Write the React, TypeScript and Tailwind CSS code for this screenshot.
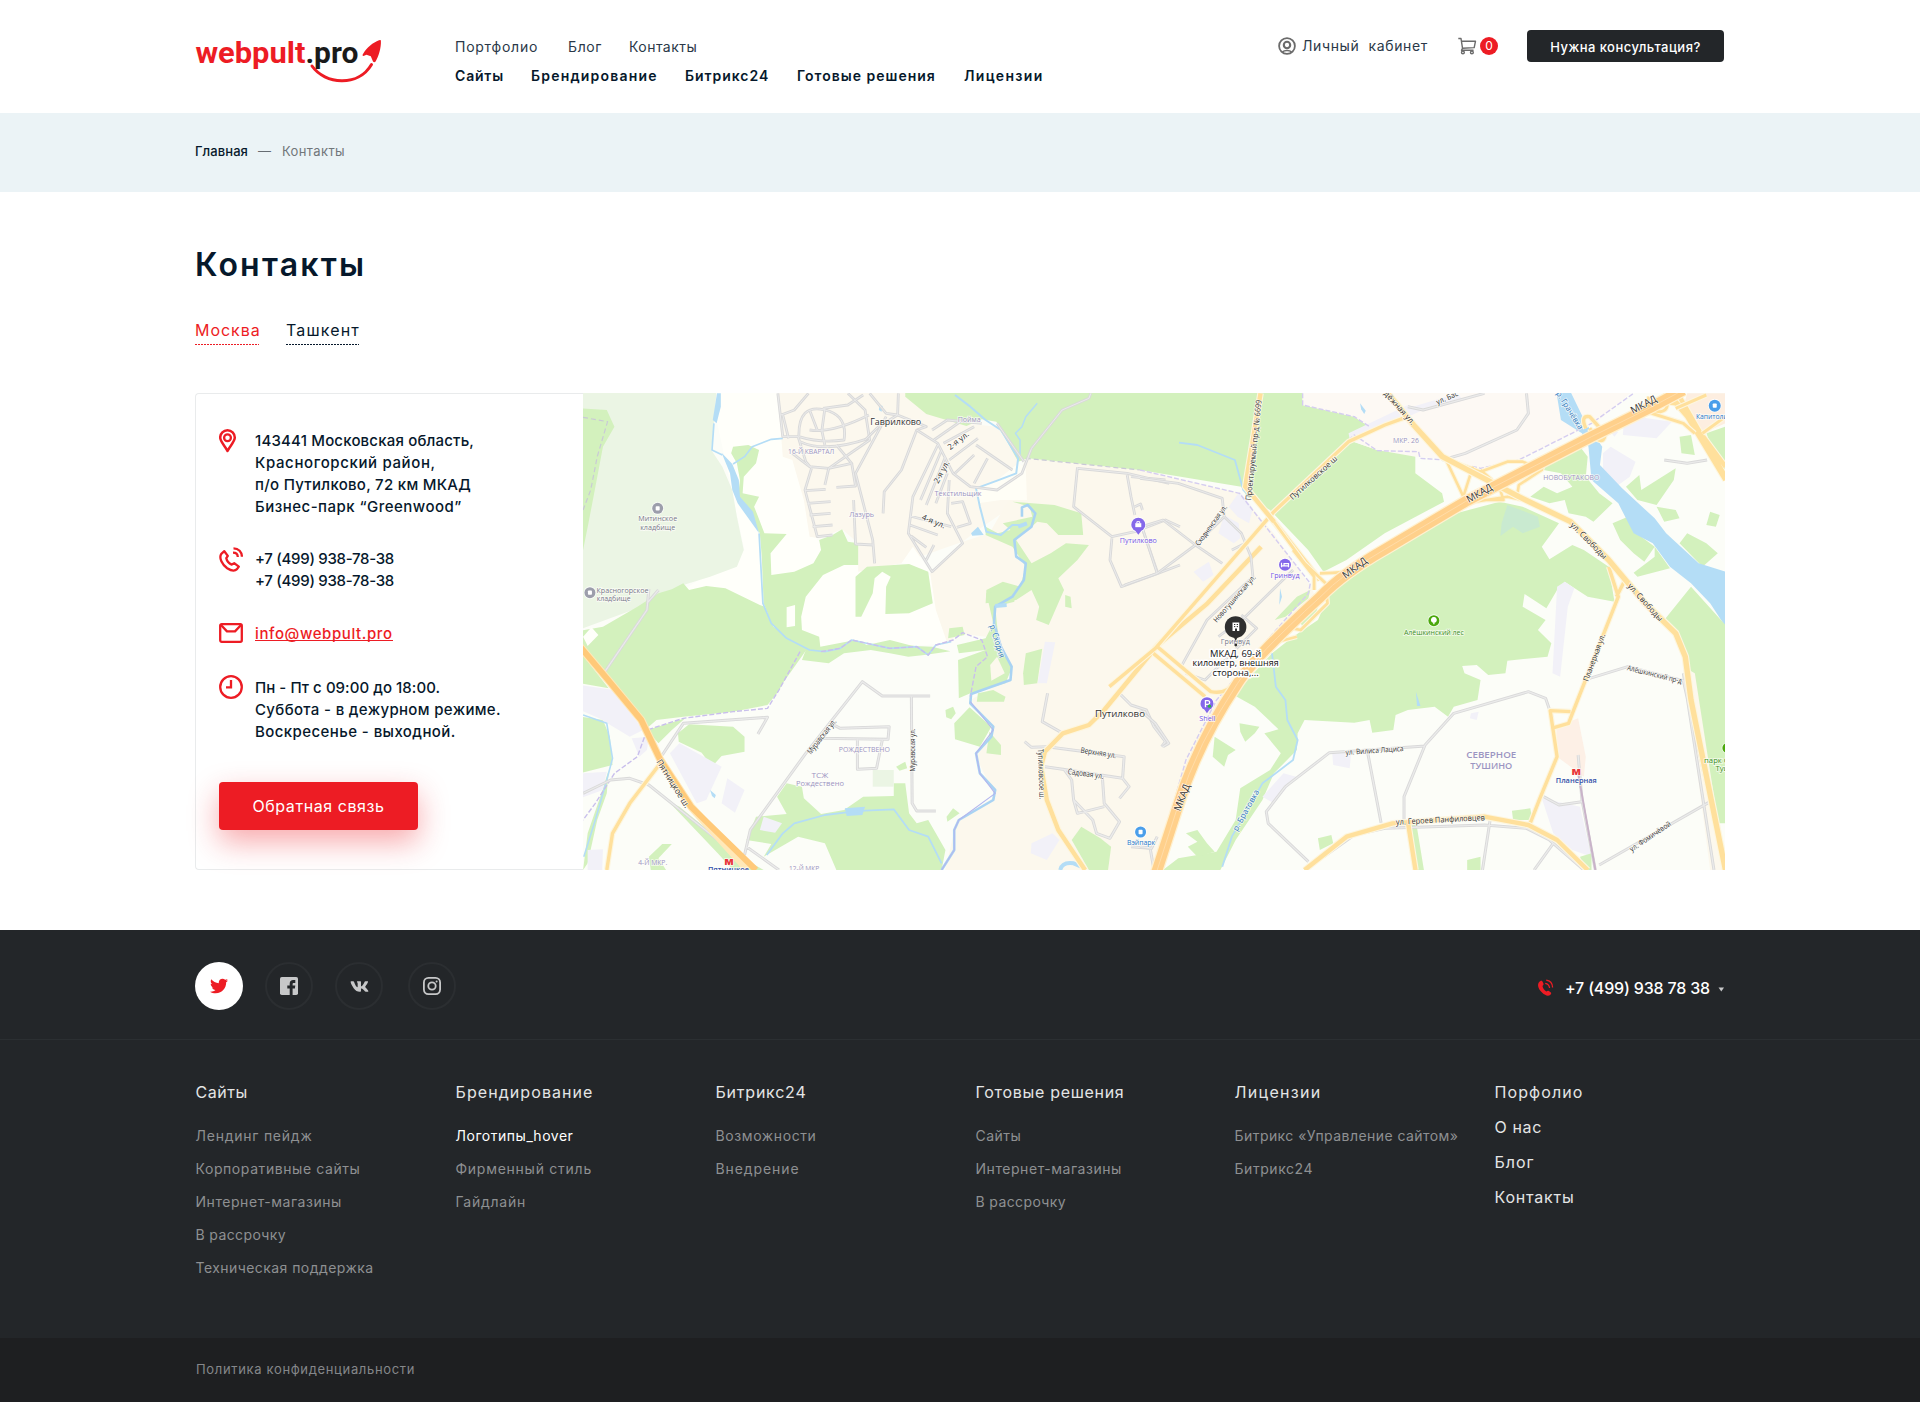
import type { ReactNode } from 'react'
import { FaTwitter, FaVk } from 'react-icons/fa'

const RED = '#ed1c24'

/* ---------- icons ---------- */

function Logo() {
  return (
    <svg width="194" height="60" viewBox="193 30 194 60" className="block overflow-visible">
      <g fontFamily="Roboto, sans-serif" fontWeight="700" fontSize="29">
        <text x="195.4" y="63.4" fill={RED} textLength="110" lengthAdjust="spacingAndGlyphs">webpult</text>
        <text x="305.4" y="63.4" fill="#1a1a1a" textLength="53" lengthAdjust="spacingAndGlyphs">.pro</text>
      </g>
      <path d="M312 66C325 84.500 358 87.500 371.500 64.500" fill="none" stroke={RED} strokeWidth="3" strokeLinecap="round" />
      <path d="M380.900 40.400C381.300 48 378.500 56.500 375.600 61.500C374.800 62.600 373.600 62.400 373 61.500L370.800 56.300L366.500 54.800L363.500 56C362.500 56 362.200 55 363 54C367 47 373 42.500 379 40.200Q380.600 39.500 380.900 40.400Z" fill={RED} />
    </svg>
  )
}

function UserIcon() {
  return (
    <svg width="18" height="18" viewBox="0 0 18 18" fill="none" stroke="#6b6b6b" className="block">
      <circle cx="9" cy="9" r="7.900" strokeWidth="1.800" />
      <circle cx="9" cy="8" r="3.200" strokeWidth="2.100" />
      <path d="M4.500 14.800C6.500 13 11.500 13 13.500 14.800" strokeWidth="1.600" />
    </svg>
  )
}

function CartIcon() {
  return (
    <svg width="19" height="18" viewBox="0 0 19 18" fill="none" stroke="#6b6b6b" strokeWidth="1.400" strokeLinejoin="round" className="block">
      <path d="M.3 1.500H3L4.500 11.200L3.500 13.300H15.500M3.400 4.200H17.500L16.200 10.600L4.500 11.200" />
      <circle cx="4.900" cy="15.400" r="1.400" />
      <circle cx="13.900" cy="15.400" r="1.400" />
    </svg>
  )
}

function PinIcon() {
  return (
    <svg width="18" height="25" viewBox="0 0 18 25" className="block" fill="none" stroke={RED}>
      <path d="M8.500 22C6.500 17.500 1.200 12.800 1.200 8.600A7.300 7.300 0 0 1 15.800 8.600C15.800 12.800 10.500 17.500 8.500 22Z" strokeWidth="2.500" strokeLinejoin="round" />
      <circle cx="8.500" cy="8.700" r="3.400" strokeWidth="2.300" />
    </svg>
  )
}

function PhoneIcon() {
  return (
    <svg width="24" height="25" viewBox="0 0 24 25" className="block" fill="none" stroke={RED} strokeWidth="2.300" strokeLinejoin="round">
      <path d="M5.300 4.200L2.300 6.800C-.4 11 3.200 17.600 8.200 21.200C12.500 24 16 24 18 22.200L19.800 19.700L15.200 16.200L12.800 17.600C10.500 16.600 7.800 13.700 7.300 11.200L8.800 8.900Z" />
      <path d="M14.500 1.300C19.600 1.300 22.900 5 22.900 9.800" />
      <path d="M14 5.700C17 5.700 18.700 7.400 18.800 10" />
    </svg>
  )
}

function MailIcon() {
  return (
    <svg width="24" height="20" viewBox="0 0 24 20" className="block" fill="none" stroke={RED} strokeWidth="2.300" strokeLinejoin="round">
      <rect x="1.200" y="1.200" width="21.600" height="17.600" rx="1.500" />
      <path d="M1.500 1.500L8 8.400H16L22.500 1.500" />
    </svg>
  )
}

function ClockIcon() {
  return (
    <svg width="24" height="24" viewBox="0 0 24 24" className="block" fill="none" stroke={RED} strokeWidth="2.300">
      <circle cx="12" cy="12" r="10.800" />
      <path d="M12 5V12.300H7" />
    </svg>
  )
}

function FacebookIcon() {
  return (
    <svg width="18" height="18" viewBox="0 0 18 18" className="block">
      <rect width="18" height="18" rx="1.800" fill="#c7c8c9" />
      <path d="M9.700 18V11.500H7.300V8.600H9.700V6.700C9.700 4.300 11 3 13.300 3H15.300V5.900H13.800C12.900 5.900 12.600 6.300 12.600 7.100V8.600H15.300L14.900 11.500H12.600V18Z" fill="#232629" />
    </svg>
  )
}

function InstagramIcon() {
  return (
    <svg width="18" height="18" viewBox="0 0 18 18" className="block" fill="none" stroke="#c7c8c9" strokeWidth="1.800">
      <rect x=".9" y=".9" width="16.200" height="16.200" rx="4.500" />
      <circle cx="9" cy="9" r="3.700" />
      <circle cx="13.600" cy="4.400" r="1" fill="#c7c8c9" stroke="none" />
    </svg>
  )
}

function PhoneSolidIcon() {
  return (
    <svg width="17" height="18" viewBox="0 0 17 18" className="block">
      <path d="M3.500 2C4.500 1.200 5.300 1.900 5.700 2.900L6.500 4.800C6.800 5.800 6.300 6.300 5.500 7C5.800 9.400 7.600 11.700 9.400 12.400C10.400 11.700 11 11.400 11.900 12L13.600 13.200C14.500 14 14.400 14.800 13.400 15.700C11.600 17.400 8.500 17 5 13.600C.8 9.500-.6 4.500 3.500 2Z" fill={RED} />
      <path d="M8.200 4.300C10.800 4.700 12.300 6.300 12.600 9M9.200 1.200C13 1.600 15.400 4.500 15.600 8.500" fill="none" stroke={RED} strokeWidth="1.300" />
    </svg>
  )
}

/* ---------- map ---------- */

const KX = 0.38265
const KY = 1 / 3
const LEFT = -3
const RIGHT = 557

const GREEN = '#d3f1bd'
const BEIGE = '#fcf8ed'
const ESTATE = '#f2f1f8'
const WATER = '#b4ddf6'

function P({ d, f }: { d: string; f: string }) {
  return <path d={d} fill={f} />
}

function S({ d, c, w, dash }: { d: string; c: string; w: number; dash?: string }) {
  return <path d={d} fill="none" stroke={c} strokeWidth={w} strokeDasharray={dash} vectorEffect="non-scaling-stroke" strokeLinejoin="round" />
}

function Street({ d, w = 3 }: { d: string; w?: number }) {
  return (
    <>
      <S d={d} c="#d9d9d9" w={w} />
      <S d={d} c="#ebebeb" w={w - 1.8} />
    </>
  )
}

function Road({ d, w = 4 }: { d: string; w?: number }) {
  return (
    <>
      <S d={d} c="#fdf6df" w={w + 1.6} />
      <S d={d} c="#ffe09c" w={w - 0.6} />
    </>
  )
}

type LabelProps = { o: number; x: number; y: number; t: string; s?: number; r?: number; c?: string; w?: number; l?: number }

function Label({ o, x, y, t, s = 8.5, r = 0, c = '#333', w = 400, l }: LabelProps) {
  return (
    <text
      transform={`translate(${o + x * KX} ${y * KY - 3}) rotate(${r})`}
      fontSize={s}
      fill={c}
      fontWeight={w}
      textAnchor="middle"
      dominantBaseline="central"
      stroke="#fffefa"
      strokeWidth="1.6"
      strokeOpacity=".75"
      paintOrder="stroke"
      textLength={l}
      lengthAdjust="spacingAndGlyphs"
    >
      {t}
    </text>
  )
}

function Poi({ o, x, y, c, r = 5.5, children }: { o: number; x: number; y: number; c: string; r?: number; children?: ReactNode }) {
  return (
    <g transform={`translate(${o + x * KX} ${y * KY - 3})`}>
      <circle r={r + 0.8} fill="#fff" opacity=".8" />
      <circle r={r} fill={c} />
      {children ?? <rect x="-2" y="-2.200" width="4" height="4.400" rx=".8" fill="#fff" />}
    </g>
  )
}

const MKAD = 'M-90 1900L45 1440L100 1245Q150 1060 255 880Q300 800 470 622Q530 550 640 478L850 335L1180 140L1330 55L1420 0'

function CityMap() {
  const lilac = '#9b95c2'
  return (
    <svg width="1142" height="477" viewBox="0 0 1142 477" className="block" fontFamily="'Open Sans', 'Noto Sans', sans-serif">
      <rect width="1142" height="477" fill="#fcfdf8" />

      {/* western half: land cover */}
      <g transform={`matrix(${KX} 0 0 ${KY} ${LEFT} -3)`}>
        <P f="#fffffa" d="M340 0H560V220L620 450L930 560L965 760L580 790L480 700L270 600L430 480Z" />
        <P f="#ebf5e4" d="M0 0H357L350 100L343 180L372 230L398 300L410 380L428 480L410 530L340 560L270 585L220 660L150 655L8 715H0Z" />
        <P f={GREEN} d="M0 55L70 60L90 110L60 170L42 280L22 400L8 480H0Z" />
        <P f={GREEN} d="M0 722L60 710L150 650L205 610L240 598L270 580L285 600L330 588L380 595L470 645L482 650L505 710L560 745L640 780L590 782L530 880L518 905L490 945L400 965L270 980L200 990L175 1015L100 890L0 780Z" />
        <P f={GREEN} d="M0 785L75 895L0 880Z" />
        <P f="#fffffa" d="M8 740L30 712L48 735L20 768Z" />
        <P f="#fcf8ee" d="M515 0H850L1000 100L1090 110L1145 210L1165 320L1040 420L1000 455L840 520L727 545V460L685 418L625 445L600 440L585 330L555 210L530 200L525 130Z" />
        <P f={BEIGE} d="M915 550L1000 455L1070 430L1120 330L1165 205L1463 240L1723 310L1813 430L1910 590L1930 640L1813 740L1713 880L1643 1040L1568 1250L1508 1460H950L985 1290L1085 1220L1035 1100L1080 1020L1020 930L1130 860L1115 800L1060 740L990 730L960 760L930 660Z" />
        <P f="#fffffa" d="M840 520L870 470L918 550L900 545L860 522Z" />
        <P f="#fffef6" d="M1090 270L1145 220L1165 235L1168 330L1100 330L1040 340L1035 295Z" />
        <P f={GREEN} d="M400 170L440 165L468 180L460 220L428 260L425 310L468 320L455 350L467 385L482 430L540 432L498 490L500 555L560 545L610 520L630 480L625 450L660 435L685 418L700 455L727 460V525L690 525L635 555L590 620L578 680L580 720L625 740L628 770L720 750L750 765L810 750L860 765L875 768L920 770L968 784L900 795L858 800L810 790L760 780L690 790L650 820L580 810L590 780L540 745L500 700L480 640L475 500L470 430L430 360L412 330L418 270L410 220L395 190Z" />
        <P f="#fffffa" d="M540 652L562 645V708L540 712Z" />
        <P f={GREEN} d="M720 560L750 530L860 522L910 545L922 640L860 670L798 672L800 590L812 560L790 545L770 565L765 610L735 680L720 680Z" />
        <P f={GREEN} d="M850 0H1888V45L2023 80L2063 110L2008 150L2083 180L2183 190V250L2253 310L2258 335L2103 430L2003 510L1943 545L1903 480L1803 360L1743 320L1728 290L1463 240L1170 205L1145 215L1088 95L1050 88L1010 108L905 72L850 20Z" />
        <P f={GREEN} d="M1060 410L1092 430L1125 420L1105 400L1182 380L1175 350L1130 335L1240 345L1310 370L1315 435L1250 435L1220 400L1195 395L1140 450L1180 520L1230 490L1270 460L1330 465L1300 510L1250 565L1265 600L1225 705L1192 690L1200 650L1180 600L1140 630L1060 640L1062 600L1105 575L1150 590L1165 530L1130 470L1060 435Z" />
        <P f={GREEN} d="M1062 610L1140 600L1135 635L1085 650L1095 760L1130 830L1112 880L1020 910L990 925L988 810L1060 780L990 790L985 765L1060 745L1080 700Z" />
        <P f={GREEN} d="M965 715L1000 710L1005 735L962 745Z" />
        <P f={BEIGE} d="M1072 825L1090 800L1110 850L1075 872Z" />
        <P f={GREEN} d="M1165 790L1208 776L1195 880L1160 885L1158 850Z" />
        <P f={GREEN} d="M1268 615L1282 620L1285 655L1268 650Z" />
        <P f={ESTATE} d="M1215 755L1242 757L1220 880H1196Z" />
        <P f={GREEN} d="M955 960L975 950L982 970L970 988L957 982Z" />
        <P f={GREEN} d="M978 1000L1018 952L1050 985L1075 1010L1045 1070L980 1048Z" />
        <P f={GREEN} d="M1070 1025L1100 1065V1095L1062 1090Z" />
        <P f={GREEN} d="M1040 910L1080 900L1112 920L1108 935L1037 935Z" />
        <P f={GREEN} d="M256 1030L285 1003L400 1010L430 1040V1085L370 1098L345 1130L318 1088L258 1055Z" />
        <P f={GREEN} d="M175 1020L275 985L240 1020L205 1060Z" />
        <P f={GREEN} d="M0 980L60 990L78 1040L85 1125L0 1150Z" />
        <P f={GREEN} d="M75 1140L70 1210L45 1290L20 1420L8 1440L20 1330L50 1230Z" />
        <P f={ESTATE} d="M0 885L90 900L165 1020L130 1040L50 985L0 960Z" />
        <P f={ESTATE} d="M135 1045L180 1040L175 1080L155 1100Z" />
        <P f={ESTATE} d="M235 1090L260 1060L370 1130L330 1230L305 1240Z" />
        <P f={ESTATE} d="M385 1165L430 1200L405 1268L370 1240Z" />
        <P f={ESTATE} d="M0 1150L70 1145L60 1200L0 1225Z" />
        <P f={ESTATE} d="M20 1380L60 1378L58 1440H20Z" />
        <P f={WATER} d="M340 1200L355 1215L352 1225L345 1218Z" />
        <P f={GREEN} d="M232 1235L260 1250L420 1400L480 1440H400L360 1390Z" />
        <P f={GREEN} d="M215 1362L240 1362L205 1405L225 1440H185L180 1400Z" />
        <P f={GREEN} d="M480 1400L500 1362L435 1350L460 1280L540 1272L515 1220L540 1180L580 1190L585 1225L630 1272L690 1260L740 1220L820 1218V1180L850 1180L860 1270L880 1300L910 1290L930 1330L955 1380L945 1440H670L640 1360L570 1340Z" />
        <P f={ESTATE} d="M480 1280L528 1300L510 1328L470 1320Z" />
        <P f="#ebf5e4" d="M765 1140H820V1190H765Z" />
        <P f={GREEN} d="M826 1130L850 1115L855 1135L835 1142Z" />
        <P f={GREEN} d="M975 1255L992 1270L960 1295L958 1280Z" />
        <P f={GREEN} d="M1285 1350L1310 1310L1360 1345L1388 1370L1380 1440H1330Z" />
        <P f={ESTATE} d="M1180 1360L1235 1330L1253 1350L1220 1410L1178 1390Z" />
        {/* water */}
        <P f={WATER} d="M358 10H368V50L357 100L347 90Z" />
        <P f={WATER} d="M370 188L398 222L415 270L418 320L452 365L468 430L440 385L412 340L398 300L392 250Z" />
        <P f={WATER} d="M1022 430L1040 410L1055 435L1025 437Z" />
        <P f={WATER} d="M692 1255L745 1250L738 1275L697 1278Z" />
        <P f={WATER} d="M783 45L791 48L788 65L781 60Z" />
        <S c={WATER} w={1.7} d="M350 100L345 180L372 195M468 430L478 640L500 700L540 745L600 780L640 785L680 775L710 750L810 775L880 770L910 795L930 765L970 755" />
        <S c={WATER} w={1.6} d="M400 222L430 200L450 170L500 148L530 145" />
        <S c={WATER} w={2} d="M980 15L1020 50L1060 90L1100 120L1145 205L1140 250L1090 272L1035 295L1045 350L1062 425L1100 435L1130 405L1165 405" />
        <S c="#a9d3f3" w={2.6} d="M1155 380L1155 352L1170 345L1190 370L1180 410L1135 450L1140 500L1165 520L1160 570L1130 620L1085 650L1082 700L1100 770L1128 830L1125 870L1022 912L1020 940L1080 1010L1075 1040L1035 1090L1045 1150L1085 1200L1080 1230L990 1290L978 1320V1380L945 1440" />
        <S c={WATER} w={4} d="M1145 410L1168 400M1085 648L1115 645" />
        <S c={WATER} w={1.8} d="M488 1395L530 1330L560 1300L640 1275L692 1268L745 1262L820 1258L860 1320L910 1340L945 1420" />
        <S c={WATER} w={1.6} d="M8 975L70 1000L85 1105L70 1170L40 1290L10 1400" />
        <S c={WATER} w={1.5} d="M1195 40L1165 80L1155 110L1138 130L1150 150V200" />
        <S c={WATER} w={4} d="M1255 1440Q1260 1415 1290 1420L1310 1430" />
        {/* administrative borders */}
        <S c="#c9bfec" w={1.4} dash="5 2" d="M630 785L680 775L710 750L810 775L880 770L910 795L930 765L975 750L1000 728L1050 750L1065 800L1035 830L1020 920M575 785L520 900L490 955L400 965L270 985L175 1020L150 1100L90 1150L40 1240L8 1290" />
        <S c="#b3b6ee" w={1.1} d="M1020 935L1080 1020L1035 1090L1045 1150L1085 1210L990 1290L978 1320V1380L945 1440" />
        <S c="#c9c9d6" w={1.2} dash="5 3" d="M8 82L72 95L45 200L28 300L8 360M1165 205L1463 240" />
        {/* streets */}
        <Street d="M517 10L530 140L570 140L590 215L605 235M530 75L545 145M597 10L560 60L525 75M635 55L700 45L740 15M572 140Q570 40 640 60Q700 75 690 150Q630 160 572 140M600 120Q660 130 755 75M575 155Q640 190 755 145M600 60L620 120M640 55L632 122L640 165M700 10L745 60L757 150L700 195L650 235L600 230L555 190M670 165L710 220L650 235" w={2.8} />
        <Street d="M605 235L588 300L620 440L660 435M588 302L642 298M594 340L655 335M600 375L655 370M608 410L660 405M670 292L720 288L710 220M650 235L640 285M800 80L720 250L765 450L770 520M715 330L720 462L765 465M745 150L780 110L830 75L905 110L880 120L840 240L795 305L792 370M757 10L800 70L830 75L832 10" w={2.8} />
        <Street d="M880 120L935 160L975 250L1020 290L1090 300L1155 250L1180 175L1260 60L1330 25L1335 10M935 165L870 320L858 430L920 545L1000 460L960 370L965 270M945 180L890 330M955 200L905 345M960 250L930 340M862 378L970 410M862 405L935 435M865 438L905 472M925 465L905 510M970 340L1000 335L1020 400L985 412M920 120L960 90L1050 100M925 150L1000 90M950 160L1030 110M965 210L1040 145M980 250L1030 195M1035 165L1130 240M1065 205L1030 280M1090 100L1160 215" w={2.8} />
        <Street d="M1300 232L1290 350L1390 440L1450 425L1530 390L1568 410M1390 445L1385 510L1415 590L1510 550L1568 525M1465 400L1510 550M1300 235L1430 250L1540 280M1430 255L1440 320L1450 375M1450 350L1465 342L1470 360M1440 260L1530 270" w={2.8} />
        <Street d="M65 845L175 660L180 597M175 640L205 600M215 1095L270 1000L490 982L465 1032M8 1210L80 1170L130 1165L180 1185L420 1405M915 918H790L738 875L590 1090L445 1320L430 1395M866 920L868 1240L880 1263H930M625 1045L805 1048L808 1010L680 1015L655 1000M725 1048V1138L775 1135L790 1050M435 1370L520 1440M1222 910L1208 995L1262 1030M1162 1055L1180 1072L1220 1070L1422 1100L1418 1165L1435 1190L1410 1225M1215 1130L1262 1138L1418 1165M1265 1138L1285 1170L1290 1230L1340 1290L1350 1330L1385 1345L1410 1295L1370 1240L1365 1160M1290 1230L1300 1270L1370 1250M1405 905L1440 945L1480 960L1500 1010L1530 1055L1520 1070M1440 1370L1490 1375L1500 1440" w={3} />
        {/* main roads */}
        <Road w={5} d="M1780 470L1640 640L1510 765L1370 960L1330 1005L1262 1030L1215 1085L1205 1130L1220 1230L1250 1320L1320 1440" />
        <Road w={4} d="M210 1120L130 1240L85 1330L70 1440" />
        <S c="#ffe8b8" w={8} d="M0 770L70 865L160 990L210 1110L290 1250L440 1440" />
        <S c="#ffc979" w={6} d="M0 770L70 865L160 990L210 1110L290 1250L460 1440" />
      </g>

      {/* eastern half */}
      <g transform={`matrix(${KX} 0 0 ${KY} ${RIGHT} -3)`}>
        <P f="#fdf9f4" d="M425 0H1290L1200 90L990 210L890 240L830 210L720 200L620 180L545 150L600 110L560 80L425 45Z" />
        <P f={ESTATE} d="M545 130L700 45L740 60L640 110L550 160Z" />
        <P f={ESTATE} d="M700 55L830 10L840 25L740 55Z" />
        <P f={ESTATE} d="M232 350L260 305L295 355L285 400L255 380ZM220 375L258 400L262 445L245 460L205 430ZM140 545L180 515L192 555L165 575Z" />
        <P f={WATER} d="M575 40L590 62L586 72L578 58Z" />
        <P f={GREEN} d="M245 915L345 790L400 740L465 690L495 610L620 510L810 375L940 335L1000 350L1095 400L1050 470L1070 508L1130 465L1160 480L1225 530L1240 635L1170 620L1110 575L1090 600L1062 655L1005 612L1000 650L1060 690L1040 720L1075 760L1065 800L960 812L955 850L910 855L880 825L842 828L848 850L890 870L882 930L820 950L805 980L770 950L700 960L668 975L662 1020L607 1028L600 990L560 998L430 990L412 1030L410 1080L350 1150L320 1230L250 1350L210 1440H60L100 1405L200 1385L250 1290L262 1195L340 1140L368 1090L325 1030L362 1018L300 950Z" />
        <P f={GREEN} d="M352 690L410 620L445 600L440 625L380 680ZM420 700L465 650L455 690L425 710Z" />
        <P f={GREEN} d="M195 1040L250 1080L230 1095L220 1130L190 1100ZM260 1000L312 1010L300 1030L275 1055L262 1025Z" />
        <P f={GREEN} d="M120 1330L150 1320L175 1360L195 1385L150 1400L125 1370L150 1355Z" />
        <P f="#c9ead0" d="M960 345L1040 380L1045 410L1000 430L975 410L942 438L945 400Z" />
        <P f={ESTATE} d="M1090 590L1110 575L1135 595L1118 650L1098 860L1078 850L1085 700Z" />
        <P f={GREEN} d="M1030 235L1090 185L1150 170L1170 200L1165 260L1200 310L1235 340L1185 395L1165 380L1120 370L1110 330L1070 340L1020 320L1055 290L1090 310L1130 290L1100 250Z" />
        <P f={GREEN} d="M1235 400L1275 380L1310 440L1345 470L1318 515L1290 490L1255 450ZM1345 470L1385 535L1300 560L1290 548L1345 500ZM1410 460L1430 430L1480 460L1510 490L1470 530ZM1440 560L1480 545L1530 560V600L1450 580Z" />
        <P f={GREEN} d="M1270 290L1305 255L1310 300L1400 235L1395 270L1350 345L1300 330ZM1350 350L1400 360L1410 385L1370 395ZM1490 365L1515 375L1505 410L1480 405ZM1410 140L1440 135L1450 195L1415 190Z" />
        <P f={GREEN} d="M1480 130L1530 110V270L1500 190Z" />
        <P f={ESTATE} d="M1265 75L1390 95L1350 145L1262 135ZM1210 190L1230 170L1295 215L1280 260L1250 285L1210 240ZM1225 120L1250 125L1240 140Z" />
        <P f="#fdeee0" d="M1430 10H1530V100L1470 130L1420 50Z" />
        <P f={WATER} d="M1088 5H1125L1165 100L1208 170L1202 225L1260 295L1345 385L1375 430L1460 520L1530 545V710L1490 640L1440 580L1385 530L1340 460L1290 430L1250 340L1180 270L1172 170L1155 130L1100 90Z" />
        <P f={GREEN} d="M1370 690L1440 590L1530 705V1300H1505L1490 1240L1430 850L1415 760Z" />
        <P f={BEIGE} d="M1420 830L1450 850L1530 1440H1490Z" />
        <P f="#fdf0e6" d="M1088 1010L1145 985L1165 1100L1160 1160L1090 1100Z" />
        <P f={ESTATE} d="M320 1220L375 1150L408 1160L350 1240ZM502 1085H552L548 1135L505 1125ZM865 970L885 965L880 990L862 985ZM1050 1225L1150 1250L1180 1400L1130 1380L1080 1330Z" />
        <P f={GREEN} d="M972 1262L1020 1255L1025 1290L975 1290ZM705 1300H722L742 1440H720ZM855 1410L890 1400V1440H855ZM465 1345L500 1335L505 1360L470 1380ZM1150 1400L1180 1390V1440H1160Z" />
        <S c={WATER} w={1.8} d="M102 158L150 165L248 210L270 300L330 360M345 790L355 890L380 930L385 990L412 1050L400 1110L320 1180L240 1340L215 1430" />
        <P f={WATER} d="M721 905L733 948L724 948ZM366 595L371 620L364 645Z" />
        <S c="#d5cdf0" w={1.4} dash="5 2" d="M0 240L260 310L445 580L440 610L340 740L200 930L120 1110L40 1430M425 10V45L560 80L600 110M545 150L560 135L620 182L728 185L732 205L800 210M850 225L890 235L990 210L1180 100L1290 10" />
        {/* streets */}
        <Street d="M0 265L100 280L215 325L220 380L145 465L45 550L-40 585M145 465L215 520M145 465L60 390L5 410M5 410L45 550M220 380L265 430L290 500L295 560L175 690L105 835M400 540L275 680L205 740M265 675L305 715L170 870L120 850M240 480L275 460" w={2.8} />
        <Street d="M700 50L740 60L900 10M1010 10L1015 70L985 120L850 190L790 210M1370 210L1430 220L1482 210" w={3} />
        <Street d="M745 1068L495 1088L380 1190L330 1265L335 1300L440 1415M595 1088L630 1298M690 1300V1220L745 1065L820 970L1015 905L1060 925L1078 985M915 1290L895 1440M1175 865L1275 830L1420 872L1490 1235L1200 1425M1055 1220L1095 1245L1155 1235M1080 1360L1030 1440M1420 850L1500 1440M1145 1095L1155 1230L1190 1440M480 1400L560 1335L640 1315L900 1305L1010 1315L1070 1350L1160 1440" w={3} />
        <S c="#c9b3c9" w={2} d="M1145 1150L1190 1440" />
        <Street d="M0 960L40 1000L75 1060L60 1070M0 1370L30 1375L45 1340" w={3} />
        {/* arterials */}
        <Road w={4} d="M1125 965L1072 962L1090 1100L1045 1225L1018 1305M1075 1015L1120 1000L1130 970L1250 620L1225 530M1245 620L1270 565" />
        <Road w={4} d="M-80 890L40 775L350 365L545 155L640 105L700 80M35 790L170 920M45 770L185 905Q230 915 250 870" />
        <Road w={5} d="M315 10L275 290L350 395L470 570" />
        <Road w={3.4} d="M350 395L430 520L485 580L490 640L420 720L400 715L405 695L470 620M400 480L455 560L455 600" />
        <Road w={3.2} d="M470 550Q500 550 540 545M360 755L410 740M800 210L845 320L870 230M820 215L890 245L960 215L1000 215L1050 240M890 240L920 270M985 320L990 285L1050 240L1060 205M850 340L960 320L1000 330M890 330L950 330L940 295" />
        <Road w={6} d="M640 0L715 105L790 200L990 320L1125 395L1225 510L1320 640L1400 730L1425 800L1440 930L1530 1440" />
        <Road w={5} d="M430 1440L540 1340L660 1300L900 1280L1015 1305L1090 1350L1170 1440M700 1295L720 1440" />
        <Road w={5} d="M1375 0L1440 90L1530 230M1400 0L1530 260M1340 30L1400 40L1430 80L1530 270" />
        <Road w={3.6} d="M1310 60L1420 100L1450 130M1470 130L1530 80M1330 20Q1320 65 1360 65Q1390 60 1370 10M1400 55L1480 15" />
        <Road w={4} d="M1165 115Q1150 75 1175 80L1215 130Q1215 160 1195 148L1175 115" />
        <S d={MKAD} c="#fff1d0" w={13} />
        <S d={MKAD} c="#ffd08b" w={10.500} />
        <S d={MKAD} c="#ffdca8" w={1} />
      </g>

      {/* settlement and district names */}
      <Label o={LEFT} x={825} y={95} t="Гаврилково" s={9} l={51} />
      <Label o={LEFT} x={1411} y={970} t="Путилково" s={9.5} l={50} />
      <Label o={LEFT} x={604} y={184} t="16-Й КВАРТАЛ" s={7} c={lilac} l={46} />
      <Label o={LEFT} x={1017} y={87} t="Пойма" s={7} c={lilac} l={23} />
      <Label o={LEFT} x={988} y={309} t="Текстильщик" s={7} c={lilac} l={47} />
      <Label o={LEFT} x={736} y={372} t="Лазурь" s={7.5} c={lilac} l={25} />
      <Label o={LEFT} x={743} y={1076} t="РОЖДЕСТВЕНО" s={7.5} c={lilac} l={51} />
      <Label o={LEFT} x={627} y={1153} t="ТСЖ" s={8} c={lilac} l={17} />
      <Label o={LEFT} x={627} y={1180} t="Рождествено" s={7.5} c={lilac} l={48} />
      <Label o={LEFT} x={190} y={1416} t="4-Й МКР." s={7} c={lilac} l={29} />
      <Label o={LEFT} x={588} y={1435} t="12-Й МКР." s={7} c={lilac} l={32} />
      <Label o={RIGHT} x={695} y={150} t="МКР. 26" s={7} c={lilac} l={26} />
      <Label o={RIGHT} x={1127} y={262} t="НОВОБУТАКОВО" s={7.5} c={lilac} l={56} />
      <Label o={RIGHT} x={918} y={1094} t="СЕВЕРНОЕ" s={9} c={lilac} w={600} l={50} />
      <Label o={RIGHT} x={918} y={1126} t="ТУШИНО" s={9} c={lilac} w={600} l={42} />

      {/* street names */}
      <Label o={LEFT} x={987} y={150} t="2-я ул." r={-38} s={8} />
      <Label o={LEFT} x={943} y={245} t="2-я ул." r={-62} s={8} />
      <Label o={LEFT} x={925} y={392} t="4-я ул." r={22} s={8} />
      <Label o={LEFT} x={630} y={1038} t="Муравская ул." r={-52} s={8} l={42} />
      <Label o={LEFT} x={866} y={1080} t="Муравская ул." r={-90} s={8} l={43} />
      <Label o={LEFT} x={1355} y={1086} t="Верхняя ул." r={9} s={8} l={36} />
      <Label o={LEFT} x={1322} y={1149} t="Садовая ул." r={8} s={8} l={36} />
      <Label o={LEFT} x={1208} y={1152} t="Тупилковское ш." r={88} s={8} l={50} />
      <Label o={LEFT} x={245} y={1180} t="Пятницкое ш." r={58} s={8.5} l={55} />
      <Label o={LEFT} x={1092} y={753} t="р. Сходня" r={73} s={8.5} c="#2f78bc" l={34} />
      <Label o={RIGHT} x={295} y={180} t="Проектируемый пр-д № 6699" r={-84} s={8} l={101} />
      <Label o={RIGHT} x={452} y={262} t="Путилковское ш" r={-42} s={8} l={61} />
      <Label o={RIGHT} x={185} y={405} t="Сходненская ул." r={-54} s={7.5} l={48} />
      <Label o={RIGHT} x={246} y={625} t="Новотушинская ул." r={-49} s={7.5} l={60} />
      <Label o={RIGHT} x={680} y={52} t="дёжная ул." r={48} s={8} l={42} />
      <Label o={RIGHT} x={802} y={22} t="ул. Бас" r={-24} s={7.5} l={23} />
      <Label o={RIGHT} x={1125} y={60} t="р. Грачёвка" r={58} s={8} c="#2f78bc" l={43} />
      <Label o={RIGHT} x={1315} y={42} t="МКАД" r={-28} s={10} l={28} />
      <Label o={RIGHT} x={886} y={308} t="МКАД" r={-29} s={10} l={28} />
      <Label o={RIGHT} x={560} y={532} t="МКАД" r={-37} s={10} l={28} />
      <Label o={RIGHT} x={108} y={1222} t="МКАД" r={-69} s={10} l={28} />
      <Label o={RIGHT} x={1174} y={450} t="ул. Свободы" r={45} s={8} l={48} />
      <Label o={RIGHT} x={1322} y={635} t="ул. Свободы" r={48} s={8} l={48} />
      <Label o={RIGHT} x={1185} y={802} t="Планерная ул." r={-70} s={8} l={50} />
      <Label o={RIGHT} x={1345} y={852} t="Алёшкинский пр-д" r={14} s={7.5} l={56} />
      <Label o={RIGHT} x={613} y={1080} t="ул. Вилиса Лациса" r={-4} s={7.5} l={58} />
      <Label o={RIGHT} x={785} y={1287} t="ул. Героев Панфиловцев" r={-3} s={8} l={89} />
      <Label o={RIGHT} x={1333} y={1338} t="ул. Фомичёвой" r={-34} s={7.5} l={48} />
      <Label o={RIGHT} x={275} y={1260} t="р. Братовка" r={-61} s={8} c="#2f78bc" l={46} />

      {/* points of interest */}
      <Poi o={LEFT} x={203} y={355} c="#9c9eab" />
      <Label o={LEFT} x={203} y={385} t="Митинское" s={7.5} c="#77798a" l={39} />
      <Label o={LEFT} x={203} y={410} t="кладбище" s={7.5} c="#77798a" l={35} />
      <Poi o={LEFT} x={26} y={608} c="#9c9eab" />
      <Label o={LEFT} x={111} y={600} t="Красногорское" s={7.5} c="#77798a" l={52} />
      <Label o={LEFT} x={88} y={624} t="кладбище" s={7.5} c="#77798a" l={34} />
      <Poi o={LEFT} x={1459} y={404} c="#8468ea" r={7}>
        <path d="M-3 6L0 10L3 6Z" fill="#8468ea" />
        <path d="M-3-1.500H3V2.500H-3Z" fill="#fff" />
        <path d="M-1.400-1.500V-3H1.400V-1.500" fill="none" stroke="#fff" strokeWidth="1" />
      </Poi>
      <Label o={LEFT} x={1459} y={449} t="Путилково" s={7.5} c="#7455e6" l={37} />
      <Poi o={RIGHT} x={379} y={524} c="#8468ea" r={6}>
        <path d="M-3.500-2V2.500M-3.500 1.200H3.500M3.500 2.500V-1H-1V1" fill="none" stroke="#fff" strokeWidth="1.200" />
      </Poi>
      <Label o={RIGHT} x={379} y={555} t="Гринвуд" s={7.5} c="#7455e6" l={29} />
      <Poi o={RIGHT} x={175} y={941} c="#8468ea" r={6.5}>
        <path d="M-2.500 6L0 9.500L2.500 6Z" fill="#8468ea" />
        <path d="M-1.500 3.500V-3H.8A1.800 1.800 0 0 1 .8.8H-1.500" fill="none" stroke="#fff" strokeWidth="1.300" />
        <circle cx="2.500" cy="2.500" r="1.700" fill="#2fb344" />
      </Poi>
      <Label o={RIGHT} x={176} y={985} t="Shell" s={7.5} c="#7455e6" l={16} />
      <Poi o={LEFT} x={1465} y={1326} c="#4a9eea" />
      <Label o={LEFT} x={1466} y={1356} t="Вэйпарк" s={7.5} c="#2478cc" l={28} />
      <Poi o={RIGHT} x={1502} y={47} c="#4a9eea" r={6} />
      <Label o={RIGHT} x={1500} y={78} t="Капитолий" s={7.5} c="#2478cc" l={36} />
      <Poi o={RIGHT} x={768} y={692} c="#4ba80c" r={5.500}>
        <path d="M0 3.500V0M0-3A2.300 2.300 0 1 1-.01-3Z" fill="#fff" stroke="#fff" strokeWidth="1.300" />
      </Poi>
      <Label o={RIGHT} x={768} y={727} t="Алёшкинский лес" s={7.5} c="#3a8f1c" l={60} />
      <Poi o={RIGHT} x={1535} y={1074} c="#4ba80c" r={5} />
      <Label o={RIGHT} x={1512} y={1111} t="парк Се" s={7.5} c="#3a8f1c" l={29} />
      <Label o={RIGHT} x={1530} y={1134} t="Туши" s={7.5} c="#3a8f1c" l={20} />
      <Label o={RIGHT} x={1140} y={1142} t="м" s={11} c="#e8363a" w={800} />
      <Label o={RIGHT} x={1140} y={1169} t="Планерная" s={7.5} c="#2f4fa8" w={600} l={41} />
      <Label o={LEFT} x={389} y={1412} t="м" s={11} c="#e8363a" w={800} />
      <Label o={LEFT} x={388} y={1437} t="Пятницкое" s={7.5} c="#2f4fa8" w={600} l={41} />

      {/* office marker */}
      <Label o={RIGHT} x={249} y={752} t="Гринвуд" s={7.5} c="#77798a" l={29} />
      <circle cx="652.600" cy="234" r="10.800" fill="#2f2f2f" />
      <path d="M649.500 238V229.500H656.300V238H654V235.500H652V238Z" fill="#fff" />
      <path d="M651 231.500h1.300M653.700 231.500h1.300M651 233.600h1.300M653.700 233.600h1.300" stroke="#2f2f2f" strokeWidth="1" />
      <path d="M650.500 243.500L652.700 248L655 243.500Z" fill="#2f2f2f" />
      <circle cx="652.800" cy="252" r="1.400" fill="#2f2f2f" />
      <g fontSize="9" fill="#111" fontWeight="500" textAnchor="middle" stroke="#fff" strokeWidth="3" paintOrder="stroke" strokeLinejoin="round">
        <text x="652.600" y="263.500" textLength="51" lengthAdjust="spacingAndGlyphs">МКАД, 69-й</text>
        <text x="652.600" y="273" textLength="86" lengthAdjust="spacingAndGlyphs">километр, внешняя</text>
        <text x="652.600" y="282.500" textLength="46" lengthAdjust="spacingAndGlyphs">сторона,...</text>
      </g>
    </svg>
  )
}

/* ---------- page ---------- */

type Item = { t: string; c: string }

const footerColumns: { head: Item; items: Item[] }[] = [
  {
    head: { t: 'Сайты', c: 'tracking-[0.57px]' },
    items: [
      { t: 'Лендинг пейдж', c: 'tracking-[0.76px]' },
      { t: 'Корпоративные сайты', c: 'tracking-[0.58px]' },
      { t: 'Интернет-магазины', c: 'tracking-[0.55px]' },
      { t: 'В рассрочку', c: 'tracking-[0.38px]' },
      { t: 'Техническая поддержка', c: 'tracking-[0.44px]' },
    ],
  },
  {
    head: { t: 'Брендирование', c: 'tracking-[1.07px]' },
    items: [
      { t: 'Логотипы_hover', c: 'tracking-[0.53px] text-white' },
      { t: 'Фирменный стиль', c: 'tracking-[0.74px]' },
      { t: 'Гайдлайн', c: 'tracking-[0.75px]' },
    ],
  },
  {
    head: { t: 'Битрикс24', c: 'tracking-[0.77px]' },
    items: [
      { t: 'Возможности', c: 'tracking-[0.6px]' },
      { t: 'Внедрение', c: 'tracking-[0.9px]' },
    ],
  },
  {
    head: { t: 'Готовые решения', c: 'tracking-[0.7px]' },
    items: [
      { t: 'Сайты', c: 'tracking-[0.5px]' },
      { t: 'Интернет-магазины', c: 'tracking-[0.55px]' },
      { t: 'В рассрочку', c: 'tracking-[0.38px]' },
    ],
  },
  {
    head: { t: 'Лицензии', c: 'tracking-[1.3px]' },
    items: [
      { t: 'Битрикс «Управление сайтом»', c: 'tracking-[0.44px]' },
      { t: 'Битрикс24', c: 'tracking-[0.55px]' },
    ],
  },
]

const footerLinks: Item[] = [
  { t: 'Порфолио', c: 'tracking-[1.1px]' },
  { t: 'О нас', c: 'tracking-[0.63px]' },
  { t: 'Блог', c: 'tracking-[0.97px]' },
  { t: 'Контакты', c: 'tracking-[0.78px]' },
]

function Header() {
  return (
    <header className="h-[113px] bg-white">
      <div className="mx-auto flex w-[1530px] items-start whitespace-nowrap text-[14px] leading-[20px] text-[#06182b]">
        <a className="-ml-[2px] mt-[30px] w-[262px]"><Logo /></a>
        <nav className="mt-[37px]">
          <div className="grid grid-cols-[113px_61px_auto] text-[#2a3848]">
            <a className="tracking-[0.73px]">Портфолио</a>
            <a className="tracking-[0.6px]">Блог</a>
            <a className="tracking-[0.45px]">Контакты</a>
          </div>
          <div className="mt-[9px] grid grid-cols-[76px_154px_112px_167px_auto] font-semibold">
            <a className="tracking-[0.81px]">Сайты</a>
            <a className="tracking-[1.2px]">Брендирование</a>
            <a className="tracking-[0.95px]">Битрикс24</a>
            <a className="tracking-[1px]">Готовые решения</a>
            <a className="tracking-[1.3px]">Лицензии</a>
          </div>
        </nav>
        <div className="ml-auto flex items-start">
          <div className="mt-[37px] w-[24px]"><UserIcon /></div>
          <a className="mt-[36px] w-[156px] tracking-[0.62px] text-[#2a3848]">Личный&nbsp; кабинет</a>
          <div className="mt-[37px] w-[22px]"><CartIcon /></div>
          <span className="mt-[37px] flex size-[18px] items-center justify-center rounded-full bg-[#ed1c24] text-[12px] text-white">0</span>
          <button className="ml-[29px] mt-[30px] mr-px h-[32px] w-[197px] rounded-[4px] bg-[#232629] pt-px text-[13px] font-medium tracking-[0.46px] text-white">
            Нужна консультация?
          </button>
        </div>
      </div>
    </header>
  )
}

function ContactCard() {
  return (
    <div className="flex h-[477px] w-[388px] flex-col items-start rounded-l-[4px] border border-r-0 border-[#e9ebec] pl-[23px] pt-[35px] text-[15px] font-medium leading-[22px] whitespace-nowrap text-[#06182b]">
      <div className="flex">
        <div className="w-[36px]"><PinIcon /></div>
        <div className="pt-px">
          <p className="tracking-[0.18px]">143441 Московская область,</p>
          <p className="tracking-[0.62px]">Красногорский район,</p>
          <p className="tracking-[0.28px]">п/о Путилково, 72 км МКАД</p>
          <p className="tracking-[0.48px]">Бизнес-парк “Greenwood”</p>
        </div>
      </div>
      <div className="mt-[29px] flex">
        <div className="w-[36px]"><PhoneIcon /></div>
        <div className="pt-px tracking-[-0.3px]">
          <p>+7 (499) 938-78-38</p>
          <p>+7 (499) 938-78-38</p>
        </div>
      </div>
      <div className="mt-[31px] flex text-[#ed1c24]">
        <div className="w-[36px]"><MailIcon /></div>
        <a className="h-[18px] border-b border-[#ed1c24] leading-[22px] tracking-[0.6px]">info@webpult.pro</a>
      </div>
      <div className="mt-[32px] flex">
        <div className="w-[36px]"><ClockIcon /></div>
        <div className="pt-[2px]">
          <p className="tracking-[0.05px]">Пн - Пт с 09:00 до 18:00.</p>
          <p className="tracking-[0.34px]">Суббота - в дежурном режиме.</p>
          <p className="tracking-[0.42px]">Воскресенье - выходной.</p>
        </div>
      </div>
      <button className="mt-[39px] h-[48px] w-[199px] rounded-[4px] bg-[#ed1c24] text-[16px] font-normal tracking-[0.57px] text-white shadow-[0_12px_30px_rgba(237,28,36,0.38)]">
        Обратная связь
      </button>
    </div>
  )
}

function Footer() {
  return (
    <footer className="bg-[#232629] whitespace-nowrap">
      <div className="h-[110px] border-b border-[#2b2f32]">
        <div className="mx-auto flex w-[1530px] items-start pt-[32px]">
          <a className="flex size-[48px] items-center justify-center rounded-full bg-white text-[#ed1c24]"><FaTwitter size={18} /></a>
          <a className="ml-[22px] flex size-[48px] items-center justify-center rounded-full border-2 border-[#2b2e31]"><FacebookIcon /></a>
          <a className="ml-[22px] flex size-[48px] items-center justify-center rounded-full border-2 border-[#2b2e31] text-[#c7c8c9]"><FaVk size={19} /></a>
          <a className="ml-[25px] flex size-[48px] items-center justify-center rounded-full border-2 border-[#2b2e31]"><InstagramIcon /></a>
          <div className="ml-auto flex items-start text-[16px] font-medium leading-[24px] tracking-[-0.18px] text-white">
            <div className="mt-[17px] w-[28px]"><PhoneSolidIcon /></div>
            <span className="mt-[14px] w-[153px]">+7 (499) 938 78 38</span>
            <svg width="7" height="5" viewBox="0 0 7 5" className="mt-[25px] block"><path d="M.5 .5H6L3.250 4.500Z" fill="#c7c8c9" /></svg>
          </div>
        </div>
      </div>
      <div className="mx-auto grid h-[298px] w-[1530px] grid-cols-[260px_260px_260px_259px_260px_auto] pt-[40px] pl-[0.5px]">
        {footerColumns.map((col) => (
          <div key={col.head.t} className="text-[14px] leading-[20px] text-[#8e9092]">
            <h3 className="text-[16px] leading-[24px] text-[#e4e5e5]"><span className={col.head.c}>{col.head.t}</span></h3>
            <ul className="mt-[22px] flex flex-col gap-[13px]">
              {col.items.map((i) => <li key={i.t}><a className={i.c}>{i.t}</a></li>)}
            </ul>
          </div>
        ))}
        <ul className="flex flex-col gap-[11px] text-[16px] leading-[24px] text-[#e4e5e5]">
          {footerLinks.map((i) => <li key={i.t}><a className={i.c}>{i.t}</a></li>)}
        </ul>
      </div>
      <div className="h-[64px] bg-[#1e1f21]">
        <div className="mx-auto w-[1530px] pl-px pt-[21px] text-[13px] leading-[20px] tracking-[0.66px] text-[#85878a]">Политика конфиденциальности</div>
      </div>
    </footer>
  )
}

export default function App() {
  return (
    <div className="w-[1920px] bg-white font-['Inter',sans-serif]">
      <Header />
      <div className="h-[79px] bg-[#ebf3f6]">
        <div className="mx-auto flex w-[1530px] whitespace-nowrap pt-[28px] text-[13px] leading-[20px]">
          <span className="w-[63px] font-medium tracking-[0.08px] text-[#06182b]">Главная</span>
          <span className="w-[24px] text-[#666c72]">—</span>
          <span className="tracking-[0.38px] text-[#71767a]">Контакты</span>
        </div>
      </div>
      <main className="mx-auto w-[1530px] pt-[53px]">
        <h1 className="text-[32px] font-semibold leading-[40px] tracking-[2.2px] text-[#06182b]">Контакты</h1>
        <div className="mt-[33px] flex gap-[27px] whitespace-nowrap text-[16px] leading-[24px]">
          <a className="flex w-[64px] flex-col text-[#ed1c24]">
            <span className="h-[26px] tracking-[0.95px]">Москва</span>
            <span className="h-px bg-[repeating-linear-gradient(90deg,#ed1c24_0_2px,transparent_2px_3px)]" />
          </a>
          <a className="flex w-[73px] flex-col text-[#06182b]">
            <span className="h-[26px] tracking-[1.16px]">Ташкент</span>
            <span className="h-px bg-[repeating-linear-gradient(90deg,#06182b_0_2px,transparent_2px_3px)]" />
          </a>
        </div>
        <section className="mt-[48px] mb-[60px] flex">
          <ContactCard />
          <CityMap />
        </section>
      </main>
      <Footer />
    </div>
  )
}
